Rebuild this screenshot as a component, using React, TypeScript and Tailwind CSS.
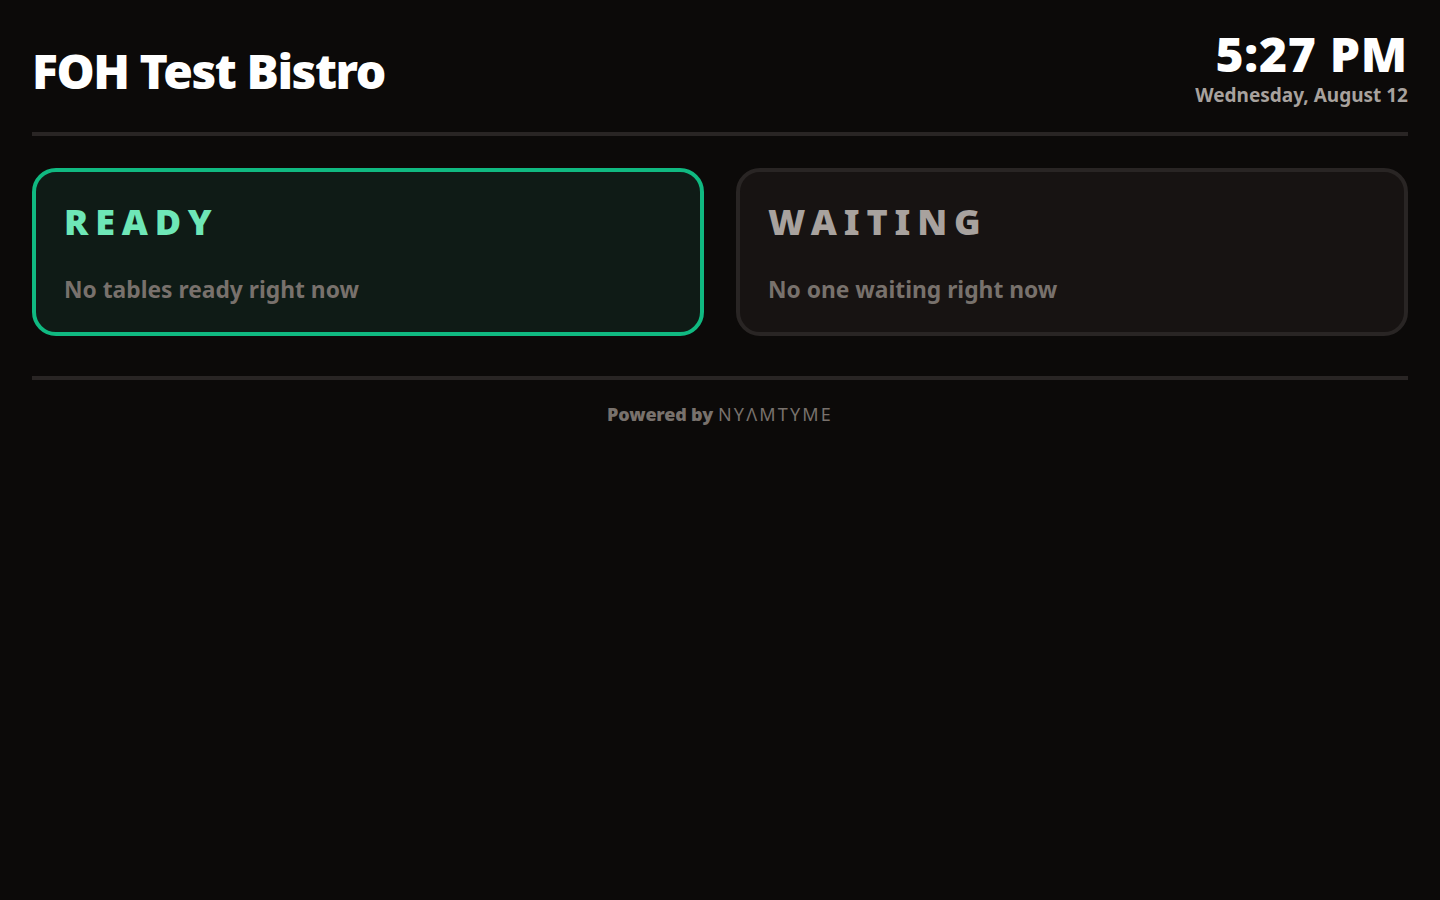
export default function App() {
  return (
    <div className="min-h-screen bg-[#0c0a09] text-white p-8 font-['Noto_Sans',sans-serif]">
      {/* Header */}
      <header className="flex items-center justify-between pb-6 border-b-4 border-[#292524]">
        <h1 className="pt-0.5 text-[48px] font-black leading-none tracking-[-0.03em]">FOH Test Bistro</h1>
        <div className="text-right pb-px">
          <div className="text-[48px] font-black leading-[44px] tracking-[0.015em]">5:27 PM</div>
          <div className="text-[19px] font-bold text-[#a8a29e] leading-6 mt-[7px]">Wednesday, August 12</div>
        </div>
      </header>

      {/* Status panels */}
      <div className="grid grid-cols-2 gap-8 mt-8">
        <section className="h-[168px] rounded-3xl border-4 border-[#10b981] bg-[#0f1b16] px-7 pt-[30px]">
          <h2 className="text-[36px] font-black tracking-[0.19em] text-[#6ee7b7] leading-10">READY</h2>
          <p className="mt-[31px] text-[22.8px] font-bold text-[#78716c]">No tables ready right now</p>
        </section>
        <section className="h-[168px] rounded-3xl border-4 border-[#292524] bg-[#171312] px-7 pt-[30px]">
          <h2 className="text-[36px] font-black tracking-[0.19em] text-[#a8a29e] leading-10">WAITING</h2>
          <p className="mt-[31px] text-[22.8px] font-bold text-[#78716c]">No one waiting right now</p>
        </section>
      </div>

      {/* Footer */}
      <footer className="mt-10 pt-5 border-t-4 border-[#292524] flex items-center justify-center gap-[5px]">
        <span className="text-lg font-black text-[#78716c] leading-7 tracking-[-0.01em]">Powered by</span>
        <span className="text-lg font-normal tracking-[0.12em] text-[#78716c] leading-7">NYΛMTYME</span>
      </footer>
    </div>
  );
}
